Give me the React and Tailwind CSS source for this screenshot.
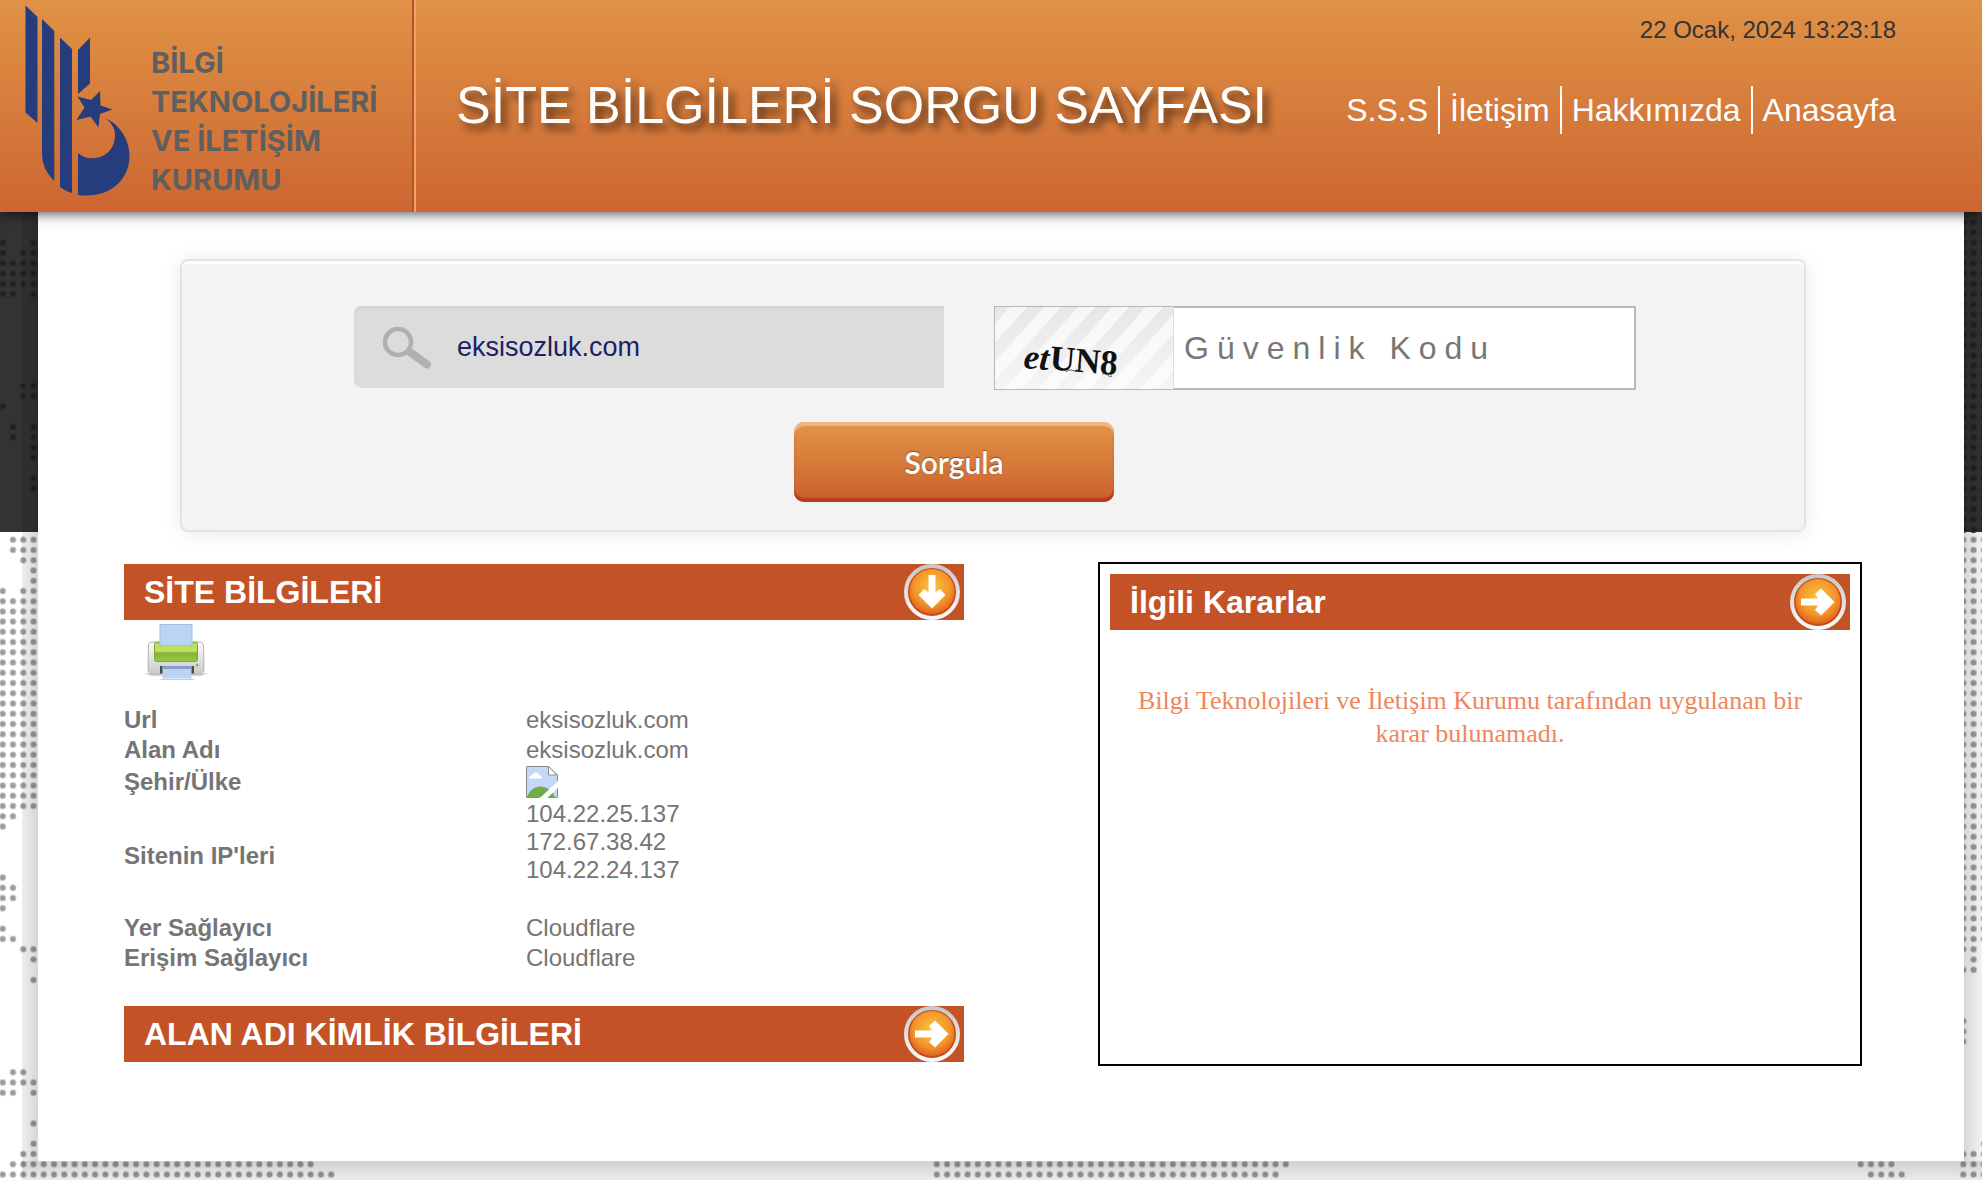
import { useState } from 'react';
import clsx from 'clsx';

const NAV_LINKS = ['S.S.S', 'İletişim', 'Hakkımızda', 'Anasayfa'];

const SITE_IPS = ['104.22.25.137', '172.67.38.42', '104.22.24.137'];

// World map dots: [row, first column, last column]
const DOT_RUNS = [
  [-29, 0, 0], [-29, 3, 3], [-28, 0, 0], [-28, 2, 3], [-27, 0, 3], [-26, 0, 3], [-25, 0, 3],
  [-24, 0, 1], [-24, 3, 3], [-15, 2, 3], [-14, 2, 3], [-13, 0, 0], [-11, 1, 1], [-11, 3, 3],
  [-10, 1, 1], [-10, 3, 3], [-9, 3, 3], [-8, 3, 3], [-6, 3, 3], [-5, 3, 3],
  [0, 1, 3], [1, 1, 3], [2, 2, 3], [3, 3, 3], [4, 3, 3], [5, 0, 0], [5, 2, 3],
  [27, 0, 1], [28, 0, 0], [33, 0, 0], [34, 0, 1], [35, 0, 1], [36, 0, 0], [38, 0, 0],
  [39, 0, 1], [40, 2, 3], [41, 3, 3], [43, 3, 3], [52, 1, 2], [53, 0, 3], [54, 0, 1],
  [54, 3, 3], [57, 3, 3], [59, 3, 3], [60, 2, 3], [61, 1, 30], [62, 0, 32],
  [61, 91, 125], [62, 91, 124], [61, 181, 184], [62, 182, 185],
  [40, 191, 192], [41, 192, 192], [42, 191, 192], [47, 191, 191], [48, 191, 191],
  [49, 191, 191], [59, 193, 193], [60, 191, 193], [61, 191, 193], [62, 191, 193],
];

for (let row = 6; row <= 26; row++) DOT_RUNS.push([row, 0, 3]);
for (let row = -31; row <= 39; row++) DOT_RUNS.push([row, 191, 193]);

const dotRunPath = ([row, from, to]) => {
  let d = '';
  for (let col = from; col <= to; col++) {
    d += `M${2.7 + col * 10.265} ${539.7 + row * 10.24}h.01`;
  }
  return d;
};

const DARK_DOTS = DOT_RUNS.filter(([row]) => row < 0).map(dotRunPath).join('');
const LIGHT_DOTS = DOT_RUNS.filter(([row]) => row >= 0).map(dotRunPath).join('');

function MapBackground() {
  return (
    <svg className="absolute inset-0 h-full w-full" aria-hidden="true">
      <rect y="212" width="100%" height="320" fill="#333" />
      <g strokeLinecap="round" fill="none">
        <path d={DARK_DOTS} stroke="#2a2a2a" strokeWidth="7" />
        <path d={DARK_DOTS} stroke="#1f1f1f" strokeWidth="4" />
        <path d={LIGHT_DOTS} stroke="#d0d0d0" strokeWidth="7" />
        <path d={LIGHT_DOTS} stroke="#9c9c9c" strokeWidth="5" />
      </g>
    </svg>
  );
}

function Logo() {
  return (
    <a href="#" className="flex items-start gap-5">
      <svg width="106" height="194" viewBox="25 5 106 194" fill="#253d7c" aria-hidden="true">
        <path d="M25.5 5.5 37.5 17v106l-12-10.500z" />
        <path d="M42 19l12.300 12v150C46 173 42 164 42 153z" />
        <path d="M60 37.500 72 49v144c-4-1-8-3-12-6z" />
        <path d="M78 50l12-12.500v46L78 94z" />
        <path d="M100 91l.5 14.500 12 4-12.500 4.500-1.500 13.500-8-11-14 3.500 8-12.500-7-11 13.500 3.500z" />
        <path d="M105 118c14 6 24.500 21 24.500 38 0 24-20 43-51.500 39v-42c6 5 12 6 18 5 12-2 19-11 19-23 0-7-4-13-10-17z" />
      </svg>
      <span className="pt-[38px] font-[Inter,sans-serif] text-[29px] leading-[39px] font-bold text-[#5f5f5f]">
        BİLGİ
        <br />
        TEKNOLOJİLERİ
        <br />
        VE İLETİŞİM
        <br />
        KURUMU
      </span>
    </a>
  );
}

function Header() {
  return (
    <header className="relative z-10 flex h-[212px] bg-linear-to-b from-[#e09246] to-[#cc6632] shadow-[0_2px_12px_rgba(0,0,0,0.65)]">
      <div className="w-[412px] shrink-0 pt-[5px] pl-[25px]">
        <Logo />
      </div>
      <div className="w-1 shrink-0 border-r-2 border-l-2 border-r-[#f0a163] border-l-[#b75428]" />
      <h1 className="pt-[75px] pl-10 text-[52px] leading-[60px] whitespace-nowrap text-white [text-shadow:5px_6px_8px_rgba(0,0,0,0.65)]">
        SİTE BİLGİLERİ SORGU SAYFASI
      </h1>
      <div className="ml-auto flex flex-col items-end pt-4 pr-[86px]">
        <time className="text-2xl leading-7 text-[#333]">22 Ocak, 2024 13:23:18</time>
        <nav className="mt-[42px] flex">
          {NAV_LINKS.map((label, i) => (
            <a
              key={label}
              href="#"
              className={clsx(
                'text-[32px] leading-[48px] text-white',
                i > 0 && 'pl-[10px]',
                i < NAV_LINKS.length - 1 && 'border-r-2 border-white pr-[10px]'
              )}
            >
              {label}
            </a>
          ))}
        </nav>
      </div>
    </header>
  );
}

function SearchIcon() {
  return (
    <svg
      width="52"
      height="44"
      viewBox="0 0 52 44"
      fill="none"
      stroke="#b0b0b0"
      className="shrink-0"
      aria-hidden="true"
    >
      <circle cx="16" cy="17" r="13" strokeWidth="4.500" />
      <path d="M28 27l17 12.500" strokeWidth="8" strokeLinecap="round" />
    </svg>
  );
}

function Captcha() {
  return (
    <svg width="180" height="84" viewBox="0 0 180 84" className="shrink-0" role="img" aria-label="etUN8">
      <defs>
        <linearGradient id="captchaFade" x1="0" y1="0" x2="0" y2="1">
          <stop offset="0" stopColor="#fff" stopOpacity="0" />
          <stop offset="1" stopColor="#fff" stopOpacity="0.600" />
        </linearGradient>
        <pattern id="captchaStripes" width="34" height="84" patternUnits="userSpaceOnUse" patternTransform="skewX(-42)">
          <rect width="34" height="84" fill="#f7f7f7" />
          <rect width="17" height="84" fill="#e7e7e7" />
        </pattern>
      </defs>
      <rect width="180" height="84" fill="url(#captchaStripes)" />
      <rect width="180" height="84" fill="url(#captchaFade)" />
      <path d="M0 .5h180M0 83.500h180M.5 0v84" stroke="#b8b8b8" />
      <path d="M179.500 1v82" stroke="#dcdcdc" />
      <g transform="rotate(5 30 62)" fill="#111" fontSize="35" fontWeight="bold" fontFamily="Liberation Serif, serif">
        <text x="29" y="62" fontStyle="italic">
          et
        </text>
        <text x="55" y="61">
          UN8
        </text>
      </g>
      <path d="M72 66c6-6 10 4 14-4M84 58c4 0 3 8-2 6M108 68c5-2 6 4 10 2" stroke="#333" fill="none" strokeWidth=".8" />
    </svg>
  );
}

function QueryForm() {
  const [domain, setDomain] = useState('eksisozluk.com');
  const [code, setCode] = useState('');

  return (
    <form
      onSubmit={(e) => e.preventDefault()}
      className="mr-[158px] ml-[142px] rounded-lg border-2 border-[#e3e3e3] bg-[#f3f3f3] pt-[45px] pr-[168px] pb-7 pl-[172px] shadow-[inset_0_3px_1px_#fff,0_2px_20px_rgba(0,0,0,0.09)]"
    >
      <div className="grid grid-cols-[590fr_642fr] items-start gap-[50px]">
        <label className="flex h-[82px] min-w-0 items-center gap-[23px] rounded-l-lg bg-[#dcdcdc] pl-7 shadow-[inset_0_3px_2px_#d4d4d4]">
          <SearchIcon />
          <input
            type="text"
            aria-label="Site adresi"
            value={domain}
            onChange={(e) => setDomain(e.target.value)}
            className="w-full min-w-0 bg-transparent text-[27px] leading-8 text-[#1f1f63] outline-none"
          />
        </label>
        <div className="flex h-[84px] min-w-0">
          <Captcha />
          <input
            type="text"
            aria-label="Güvenlik Kodu"
            placeholder="Güvenlik Kodu"
            value={code}
            onChange={(e) => setCode(e.target.value)}
            className="w-full min-w-0 border-2 border-l-0 border-[#b8b8b8] bg-white pl-[10px] text-[32px] leading-9 tracking-[8px] outline-none placeholder:text-[#777]"
          />
        </div>
      </div>
      <div className="mt-8 flex justify-center pr-[82px]">
        <button
          type="submit"
          className="h-20 w-80 rounded-[10px] bg-linear-to-b from-[#e29545] to-[#ca5f2f] font-[Lato,sans-serif] text-[30px] leading-9 font-semibold text-white shadow-[inset_0_4px_1px_#ecb888,inset_0_-4px_2px_#b43a1c] [text-shadow:0_-1px_1px_rgba(0,0,0,0.4)]"
        >
          Sorgula
        </button>
      </div>
    </form>
  );
}

function ArrowBadge({ open }) {
  return (
    <svg width="56" height="56" viewBox="0 0 56 56" aria-hidden="true">
      <defs>
        <radialGradient id="badgeFill" cx=".5" cy=".4" r=".6">
          <stop offset="0" stopColor="#fbc63c" />
          <stop offset=".65" stopColor="#f3962c" />
          <stop offset="1" stopColor="#e2641c" />
        </radialGradient>
        <linearGradient id="badgeRing" x1="0" y1="0" x2="0" y2="1">
          <stop offset="0" stopColor="#c8c8c8" />
          <stop offset="1" stopColor="#fafafa" />
        </linearGradient>
      </defs>
      <circle cx="28" cy="28" r="26" fill="#c84a18" stroke="url(#badgeRing)" strokeWidth="4" />
      <circle cx="28" cy="27.500" r="22.500" fill="url(#badgeFill)" />
      <path
        d="M24.500 11h7v17l4.500-3 5.500 6L28 44.500 14.500 31l5.500-6 4.500 3z"
        fill="#fff"
        transform={open ? undefined : 'rotate(-90 28 28)'}
      />
    </svg>
  );
}

function SectionBar({ title, open, onToggle }) {
  return (
    <h2>
      <button
        type="button"
        aria-expanded={open}
        onClick={onToggle}
        className="flex h-14 w-full items-center justify-between bg-[#c45227] pr-1 pl-5 text-left text-[32px] leading-9 font-bold text-white"
      >
        {title}
        <ArrowBadge open={open} />
      </button>
    </h2>
  );
}

function PrinterIcon() {
  return (
    <svg width="64" height="58" viewBox="0 0 64 58" aria-hidden="true">
      <defs>
        <linearGradient id="printerBody" x1="0" y1="0" x2="0" y2="1">
          <stop offset="0" stopColor="#fdfdfd" />
          <stop offset="1" stopColor="#c9c9c9" />
        </linearGradient>
        <linearGradient id="printerLid" x1="0" y1="0" x2="0" y2="1">
          <stop offset="0" stopColor="#b4dc5c" />
          <stop offset=".45" stopColor="#c0e468" />
          <stop offset=".55" stopColor="#88b434" />
          <stop offset="1" stopColor="#98c840" />
        </linearGradient>
      </defs>
      <path d="M0 51h64l-6 3H6z" fill="#d6d6d6" />
      <path d="M14 57h38l-6 1.500H20z" fill="#ccc" />
      <path d="M9 20h46c3 0 4 1 4.500 4l.5 23c0 3-2 5-4 5H9c-3 0-5-2-5-5l.5-23c0-3 1.500-4 4.500-4z" fill="url(#printerBody)" stroke="#b4b4b4" />
      <rect x="10.500" y="20.500" width="43" height="19" rx="2" fill="url(#printerLid)" stroke="#7da82c" />
      <rect x="16" y="2.500" width="32" height="21" fill="#bcd4f4" stroke="#a0c0ea" />
      <rect x="16" y="44" width="34" height="7.500" fill="#4a4a4e" />
      <rect x="18.500" y="44" width="29" height="12.500" fill="#bcd4f4" />
      <rect x="18.500" y="44" width="29" height="3" fill="#8c9cc8" />
      <circle cx="53" cy="43" r="1.500" fill="#88c040" />
    </svg>
  );
}

function MissingFlag() {
  return (
    <svg width="32" height="32" viewBox="0 0 32 32" className="block" role="img" aria-label="Ülke bayrağı">
      <path d="M.5.5h22l9 9v22H.5z" fill="#c5d8f7" />
      <path d="M3 12.500c0-2 1.500-3 3-3 0-3 6-5 8 0 2 0 2.500 3 1 3z" fill="#fff" />
      <path d="M1 31c5-14 22-14 28 0z" fill="#6fae4b" />
      <path d="M32 15v7L21 32h-7z" fill="#fff" />
      <path d="M22.500.5v8.500h9z" fill="#fff" stroke="#8b8b8b" />
      <path d="M31.500 15V9.500L22.500.5H.5v31h13M31.500 22v9.500H22" fill="none" stroke="#8b8b8b" />
    </svg>
  );
}

function InfoRow({ label, children }) {
  return (
    <tr>
      <th scope="row" className="w-[402px] py-px text-left align-middle font-bold">
        {label}
      </th>
      <td className="py-px">{children}</td>
    </tr>
  );
}

function SiteInfo() {
  return (
    <>
      <button type="button" aria-label="Yazdır" className="mt-px ml-5 block h-[60px]">
        <PrinterIcon />
      </button>
      <table className="mt-6 mb-[33px] w-full text-2xl leading-7 text-[#757575]">
        <tbody>
          <InfoRow label="Url">eksisozluk.com</InfoRow>
          <InfoRow label="Alan Adı">eksisozluk.com</InfoRow>
          <InfoRow label="Şehir/Ülke">
            <MissingFlag />
          </InfoRow>
          <InfoRow label="Sitenin IP'leri">
            <ul className="pb-7">
              {SITE_IPS.map((ip) => (
                <li key={ip}>{ip}</li>
              ))}
            </ul>
          </InfoRow>
          <InfoRow label="Yer Sağlayıcı">Cloudflare</InfoRow>
          <InfoRow label="Erişim Sağlayıcı">Cloudflare</InfoRow>
        </tbody>
      </table>
    </>
  );
}

function App() {
  const [siteOpen, setSiteOpen] = useState(true);
  const [ownerOpen, setOwnerOpen] = useState(false);
  const [rulingsOpen, setRulingsOpen] = useState(false);

  return (
    <div className="relative min-h-screen overflow-hidden bg-white font-['Liberation_Sans',Arial,sans-serif]">
      <MapBackground />
      <div className="relative">
        <Header />
        <div className="flex pl-[22px]">
          <div className="w-4 shrink-0 bg-linear-to-r from-black/7 to-black/16" />
          <main className="min-w-0 flex-1 bg-white pt-[47px] pb-[95px]">
            <QueryForm />
            <div className="mt-[30px] grid grid-cols-[840fr_764fr] items-start gap-[134px] pr-[102px] pl-[86px]">
              <section className="pt-0.5">
                <SectionBar title="SİTE BİLGİLERİ" open={siteOpen} onToggle={() => setSiteOpen(!siteOpen)} />
                <SiteInfo />
                <SectionBar
                  title="ALAN ADI KİMLİK BİLGİLERİ"
                  open={ownerOpen}
                  onToggle={() => setOwnerOpen(!ownerOpen)}
                />
              </section>
              <section className="min-h-[504px] border-2 border-black p-[10px]">
                <SectionBar
                  title="İlgili Kararlar"
                  open={rulingsOpen}
                  onToggle={() => setRulingsOpen(!rulingsOpen)}
                />
                <p className="mt-[54px] mr-5 px-5 text-center font-['Liberation_Serif',serif] text-[26px] leading-[33px] text-[#f0855c]">
                  Bilgi Teknolojileri ve İletişim Kurumu tarafından uygulanan bir karar bulunamadı.
                </p>
              </section>
            </div>
          </main>
          <div className="w-[18px] shrink-0 bg-linear-to-r from-black/16 to-black/5" />
        </div>
        <div className="ml-[22px] h-[19px] bg-linear-to-b from-black/18 to-black/8" />
      </div>
    </div>
  );
}

export default App;
